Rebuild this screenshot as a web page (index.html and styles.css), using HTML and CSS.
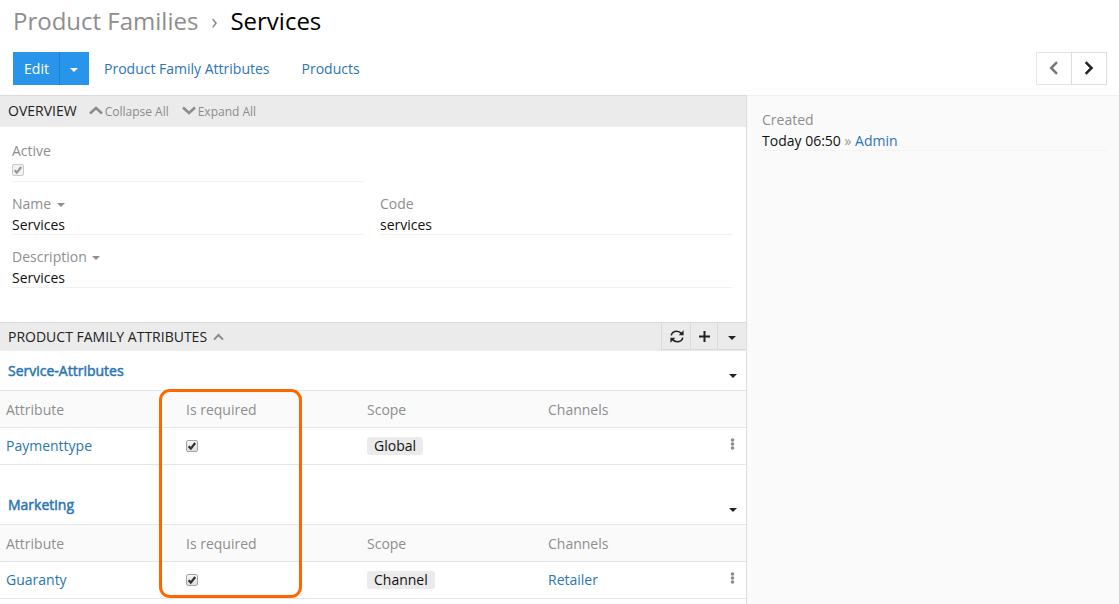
FILE: index.html
```html
<!DOCTYPE html>
<html lang="en">
<head>
<meta charset="utf-8">
<title>Services</title>
<link rel="stylesheet" href="styles.css">
</head>
<body>
<header class="page-header">
  <h1 class="title"><span class="parent">Product Families</span><span class="sep">›</span><span>Services</span></h1>
  <div class="toolbar">
    <div class="edit-group"><button class="edit">Edit</button><button class="edit-more"><i class="caret"></i></button></div>
    <a class="nav-link">Product Family Attributes</a>
    <a class="nav-link">Products</a>
    <div class="pager">
      <button class="page-btn prev"><svg width="10" height="14" viewBox="0 0 10 14"><path d="M8 1.2 2.2 7 8 12.8"/></svg></button>
      <button class="page-btn next"><svg width="10" height="14" viewBox="0 0 10 14"><path d="M1.7 1.2 7.5 7l-5.8 5.8"/></svg></button>
    </div>
  </div>
</header>
<div class="content">
  <main class="main">
    <section class="overview">
      <div class="heading"><span class="heading-text">OVERVIEW</span>
        <a class="toggle"><svg width="14" height="9" viewBox="0 0 14 9"><path d="M1 7.5 7 2l6 5.5"/></svg>Collapse All</a>
        <a class="toggle expand"><svg width="14" height="9" viewBox="0 0 14 9"><path d="M1 1.5 7 7l6-5.5"/></svg>Expand All</a>
      </div>
      <div class="fields">
        <div class="field"><div class="label">Active</div><div class="value"><span class="check disabled"><svg viewBox="0 0 12 12"><path d="M2.6 6.3 4.8 8.6 9.2 3"/></svg></span></div></div>
        <div class="field name"><div class="label">Name<i class="caret"></i></div><div class="value">Services</div></div>
        <div class="field"><div class="label">Code</div><div class="value">services</div></div>
        <div class="field wide"><div class="label">Description<i class="caret"></i></div><div class="value">Services</div></div>
      </div>
    </section>
    <section class="attributes">
      <div class="heading attr-heading"><span class="heading-text">PRODUCT FAMILY ATTRIBUTES</span>
        <svg class="up" width="11" height="8" viewBox="0 0 11 8"><path d="M1 6.6 5.5 2 10 6.6"/></svg>
        <div class="actions">
          <button class="action refresh"><svg width="14" height="13" viewBox="0 0 14 13"><path d="M1.2 5.4C1.8 2.8 4 1.2 6.8 1.2c2 0 3.4.8 4.8 2.4M12.8 7.6c-.6 2.6-2.8 4.2-5.6 4.2-2 0-3.4-.8-4.8-2.4"/><path class="solid" d="M13.6.3v5H8.7zM.4 12.7v-5h4.9z"/></svg></button>
          <button class="action plus"><svg width="11" height="11" viewBox="0 0 11 11"><path d="M5.5 0v11M0 5.5h11"/></svg></button>
          <button class="action more"><i class="caret"></i></button>
        </div>
      </div>
      <div class="group">
        <div class="group-title"><a>Service-Attributes</a><i class="caret"></i></div>
        <div class="row head"><span>Attribute</span><span>Is required</span><span>Scope</span><span>Channels</span></div>
        <div class="row"><a>Paymenttype</a><span class="check"><svg viewBox="0 0 12 12"><path d="M2.6 6.3 4.8 8.6 9.2 3"/></svg></span><span class="scope"><b class="tag">Global</b></span><span></span><svg class="dots" width="5" height="12" viewBox="0 0 5 12"><circle cx="2.5" cy="2" r="1.8"/><circle cx="2.5" cy="6" r="1.8"/><circle cx="2.5" cy="10" r="1.8"/></svg></div>
      </div>
      <div class="group">
        <div class="group-title"><a>Marketing</a><i class="caret"></i></div>
        <div class="row head"><span>Attribute</span><span>Is required</span><span>Scope</span><span>Channels</span></div>
        <div class="row"><a>Guaranty</a><span class="check"><svg viewBox="0 0 12 12"><path d="M2.6 6.3 4.8 8.6 9.2 3"/></svg></span><span class="scope"><b class="tag">Channel</b></span><a>Retailer</a><svg class="dots" width="5" height="12" viewBox="0 0 5 12"><circle cx="2.5" cy="2" r="1.8"/><circle cx="2.5" cy="6" r="1.8"/><circle cx="2.5" cy="10" r="1.8"/></svg></div>
      </div>
      <div class="highlight"></div>
    </section>
  </main>
  <aside class="side">
    <div class="label">Created</div>
    <div class="value">Today 06:50 <span class="muted">»</span> <a>Admin</a></div>
  </aside>
</div>
</body>
</html>
```
FILE: styles.css
```css
* { box-sizing: border-box; }
body { margin: 0; height: 604px; overflow: hidden; display: flex; flex-direction: column; background: #fff; color: #111; font: 14px/21px "Open Sans", sans-serif; }
button { margin: 0; padding: 0; border: 0; background: none; color: #222; font: inherit; display: flex; align-items: center; justify-content: center; }
a { color: #2a75b5; text-decoration: none; }
svg { display: block; fill: none; stroke: currentColor; flex: none; }
.caret { display: inline-block; border: 4px solid transparent; border-top-color: currentColor; border-bottom: 0; }

.page-header { height: 95px; flex: none; padding: 5px 12px 0 13px; }
.title { display: flex; margin: 0; height: 47px; font-size: 24px; line-height: 32px; font-weight: 400; color: #000; }
.parent { color: #8e8e8e; }
.sep { width: 32px; text-align: center; font-size: 21px; color: #888; }
.toolbar { display: flex; align-items: center; height: 33px; }
.edit-group { display: flex; height: 33px; background: #2895ea; }
.edit-group button { color: #fff; }
.edit { width: 47px; padding-left: 1px; border-right: 1px solid #1c7fd0; }
.edit-more { width: 29px; padding: 3px 2px 0 0; }
.nav-link { margin-left: 15px; }
.nav-link + .nav-link { margin-left: 32px; }
.pager { display: flex; margin-left: auto; }
.page-btn { width: 36px; height: 33px; padding-bottom: 1px; border: 1px solid #ddd; }
.page-btn svg { stroke-width: 2.5; }
.prev { width: 35px; padding-right: 1px; border-color: #e5e5e5; border-right: 0; color: #777; }

.content { flex: 1; display: flex; min-height: 0; }
.main { width: 747px; border-right: 1px solid #ddd; }
.heading { display: flex; align-items: center; background: #ebebeb; border-top: 1px solid #dadada; color: #222; }
.heading-text { margin-bottom: 2px; }
.overview { height: 227px; }
.overview .heading { height: 32px; padding-left: 8px; }
.toggle { display: flex; align-items: center; margin-left: 12px; gap: 2px; color: #8c8c8c; font-size: 12px; }
.toggle svg { stroke-width: 2.6; margin-bottom: 2px; }
.expand { margin-left: 13px; }
.fields { display: grid; grid-template-columns: 352px 353px; column-gap: 16px; row-gap: 11px; padding: 13px 0 0 12px; }
.field { height: 42px; border-bottom: 1px solid #f1f1f1; }
.field:first-child { grid-column: 1; }
.name { grid-column: 1; }
.wide { grid-column: 1 / 3; }
.label { color: #8e8e8e; }
.label .caret { margin: 0 0 2px 6px; }
.wide .caret { margin-left: 5px; }
.field .value { height: 20px; display: flex; align-items: center; }
.check { width: 12px; height: 12px; border: 1px solid #a5a5a5; border-radius: 2px; background: linear-gradient(#f5f5f5, #dedede); color: #333; }
.check svg { width: 12px; height: 12px; margin: -1px; stroke-width: 2.3; }
.disabled { border-color: #c9c9c9; color: #999; background: #f2f2f2; margin-top: -3px; }

.attributes { position: relative; }
.attr-heading { height: 29px; padding-left: 8px; }
.up { margin-left: 6px; color: #888; stroke-width: 2; }
.actions { display: flex; align-self: stretch; margin-left: auto; }
.action { height: 27px; border-left: 1px solid #d9d9d9; border-bottom: 1px solid #d9d9d9; width: 29px; }
.refresh { padding: 0 0 0 1px; }
.refresh svg { stroke-width: 1.6; }
.refresh .solid { fill: currentColor; stroke: none; }
.plus { width: 27px; }
.plus svg { stroke-width: 2; }
.more { padding-top: 3px; }
.group { height: 134px; }
.group-title { height: 39px; padding: 0 9px 0 8px; display: flex; align-items: center; justify-content: space-between; }
.group-title a { -webkit-text-stroke: .5px #2a75b5; }
.group-title .caret { margin-top: 11px; color: #222; }
.row { display: grid; grid-template-columns: 180px 181px 181px 182px 5px; align-items: center; height: 37px; padding-left: 6px; border-bottom: 1px solid #e6e6e6; }
.row > a { margin-bottom: 2px; }
.head { height: 38px; border-top: 1px solid #e6e6e6; background: #fafafa; color: #8e8e8e; }
.scope { display: flex; margin-bottom: 1px; }
.tag { padding: 0 7px 1px; border-radius: 3px; background: #ebebeb; font-weight: 400; line-height: 17px; }
.dots { fill: #8c8c8c; stroke: none; margin-top: -4px; }
.highlight { position: absolute; left: 159px; top: 67px; width: 143px; height: 209px; border: 3px solid #f60; border-radius: 11px; }
.side { flex: 1; padding: 13px 12px 0 15px; background: #fafafa; border-top: 1px solid #f1f1f1; }
.side .value { height: 21px; border-bottom: 1px solid #f4f4f4; }
.muted { color: #999; }
```
